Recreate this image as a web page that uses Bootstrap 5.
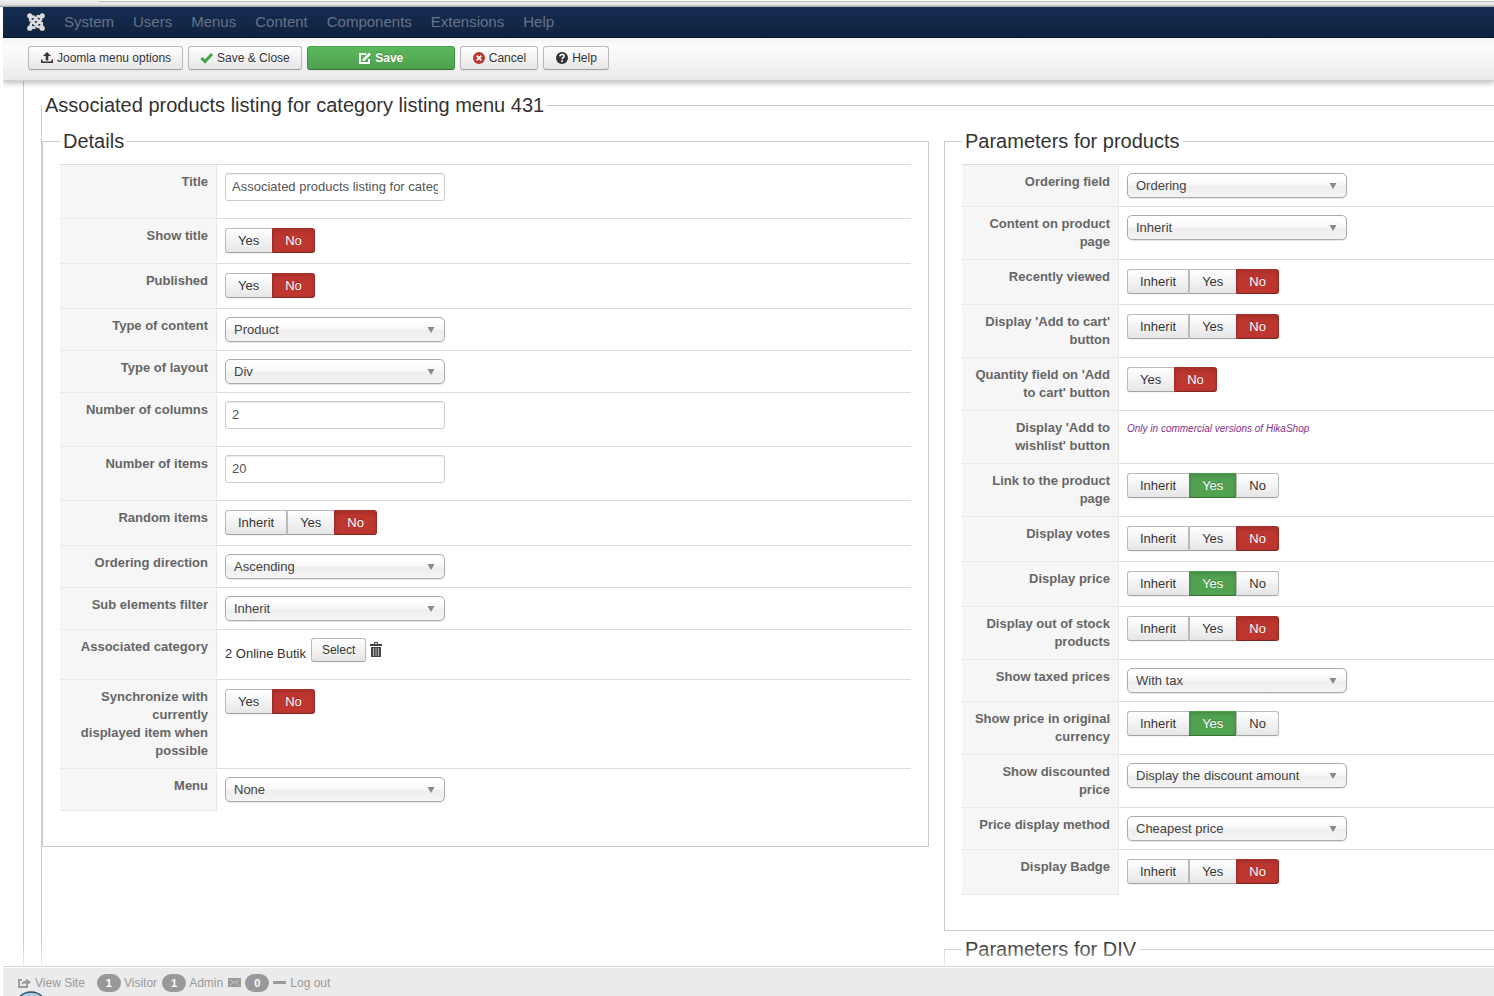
<!DOCTYPE html>
<html lang="en">
<head>
<meta charset="utf-8">
<meta name="viewport" content="width=device-width, initial-scale=1">
<title>Associated products listing - Administration</title>
<link href="https://cdn.jsdelivr.net/npm/bootstrap@5.3.0/dist/css/bootstrap.min.css" rel="stylesheet">
<style>
body{font-family:"Liberation Sans",Arial,sans-serif;font-size:13px;line-height:18px;color:#333;background:#fff}
.window-edge{height:7px;background:linear-gradient(#efefef,#e2e2e2 5px,#ababab 6px)}
.window-edge span{display:block;height:2px;margin-left:98px;background:#fff;border-bottom:1px solid #bdbdbd;border-radius:0 0 0 3px}
.app{margin-left:3px;min-height:0}
.topbar{height:31px;background:linear-gradient(#152d53,#10223e);border-bottom:1px solid #0b182c;padding:0 24px;gap:19px}
.topbar a{color:#66738a;font-size:15px;line-height:20px;text-decoration:none}
.topbar a:hover{color:#fff}
.toolbar{height:43px;background:linear-gradient(#f2f2f2,#fdfdfd 8px,#ebebeb);border-bottom:1px solid #d0d0d0;box-shadow:0 2px 6px rgba(0,0,0,.28);clip-path:inset(0 0 -12px 0);padding:8px 25px 0;gap:5px;z-index:2}
.btn{--bs-btn-font-size:13px;--bs-btn-line-height:18px;--bs-btn-border-radius:3px;--bs-btn-padding-y:2px;--bs-btn-padding-x:12px;color:#333;border:1px solid #bbb;border-bottom-color:#a2a2a2;background:linear-gradient(#fff,#e6e6e6);box-shadow:0 1px 2px rgba(0,0,0,.05);text-shadow:0 1px 1px rgba(255,255,255,.75)}
.toolbar .btn{--bs-btn-font-size:12px;--bs-btn-padding-x:11px;height:24px;gap:3px}
.toolbar .btn-save{width:148px;color:#fff;font-weight:bold;background:linear-gradient(#5cb85c,#4fa04f);border-color:#46a546 #419341 #387038;text-shadow:0 -1px 0 rgba(0,0,0,.25)}
.work{border-left:1px solid #ccc;margin-left:20px;padding:14px 0 0 17px;overflow:hidden;min-height:0}
fieldset{border:1px solid #ccc;min-width:0}
legend{float:none;width:auto;margin:0;padding:0 3px;font-size:20px;line-height:20px;color:#333}
.outer-set{border-width:1px 0 0 1px;min-height:100vh}
.outer-set>legend{margin-bottom:16px}
.panels{display:grid;grid-template-columns:minmax(0,887fr) minmax(0,550fr);column-gap:15px;align-items:start}
.panel-set{padding:13px 17px 17px}
.panel-right{padding-right:0;border-right:0}
.panel-set+.panel-set{margin-top:8px}
.admin-table{width:100%;table-layout:fixed;margin-bottom:18px;border-collapse:separate;border-spacing:0}
.admin-table th{width:157px;padding:8px;text-align:right;vertical-align:top;color:#666;background:#f6f6f6;border-right:1px solid #e9e9e9;border-top:1px solid #e9e9e9}
.admin-table td{padding:8px;vertical-align:top;border-top:1px solid #ddd}
.admin-table tr:first-child th{border-top-color:#ddd}
.admin-table tr:last-child th{border-bottom:1px solid #e9e9e9}
.admin-table tr:last-child td{padding-bottom:9px}
.admin-table .form-control{width:220px;height:28px;margin-bottom:9px;padding:3px 6px 5px;font-size:13px;line-height:18px;color:#555;border:1px solid #ccc;border-radius:3px;box-shadow:inset 0 1px 1px rgba(0,0,0,.075)}
.admin-table .form-select{width:220px;height:25px;padding:0 24px 0 8px;font-size:13px;line-height:22px;color:#444;border:1px solid #aaa;border-radius:5px;background:url("data:image/svg+xml,%3Csvg xmlns='http://www.w3.org/2000/svg' width='8' height='6'%3E%3Cpath d='M.5 0h7L4 6z' fill='%23888'/%3E%3C/svg%3E") no-repeat right 9px center,linear-gradient(#fff 20%,#f6f6f6 50%,#eee 52%,#f4f4f4);box-shadow:0 1px 1px rgba(0,0,0,.1)}
.choice{display:flex;width:max-content;margin:1px 0 2px}
.choice .btn{height:25px;padding-top:3px;border-radius:0}
.choice .btn:first-of-type{border-radius:3px 0 0 3px}
.choice .btn:last-of-type{border-radius:0 3px 3px 0}
.choice .btn:not(:last-of-type):has(+.btn-check:checked){border-right-width:0;padding-right:13px}
.btn-check:checked+.btn{color:#fff;text-shadow:0 -1px 0 rgba(0,0,0,.25);box-shadow:inset 0 2px 4px rgba(0,0,0,.15)}
.btn-check:checked+.btn.opt-yes{background:#51a351;border-color:#46a546 #419341 #387038}
.btn-check:checked+.btn.opt-no{background:#bd362f;border-color:#a93029 #a02a24 #802420}
.pick{height:33px;gap:4px}
.pick span{padding:7px 1px 0 0}
.pick .btn{--bs-btn-padding-x:10px;height:24px;font-size:12px}
.paid-only{font-size:10px;line-height:18px;font-style:italic;color:#85308c;text-decoration:none}
.statusbar{height:30px;background:#ebebeb;border-top:1px solid #d4d4d4;box-shadow:0 -5px 14px 6px rgba(255,255,255,.75),inset 0 1px 0 #fff;padding:2px 15px 0;font-size:12px;z-index:2;color:#999}
.statusbar a{color:#999;text-decoration:none}
.statusbar .badge{font-size:11px;line-height:14px;padding:2px 9px;margin-right:3px;border-radius:9px;background:#999;color:#fff}
.statusbar .count-name{margin-right:5px}
.orb{left:15px;bottom:0}
</style>
</head>
<body>
<div class="d-flex flex-column vh-100 overflow-hidden">
<div class="window-edge flex-shrink-0"><span></span></div>
<div class="app d-flex flex-column flex-grow-1">
<nav class="topbar d-flex align-items-center flex-shrink-0" aria-label="Main">
<a href="#" class="d-flex" aria-label="Home"><svg width="18" height="18" viewBox="0 0 18 18" fill="none" stroke="#dcdcdc" stroke-width="2.700"><path d="M3.300 8.500V6.200c0-2.600 3-3.200 4.700-1.500l5.500 5.500M9.500 3.400h2c2.800 0 3.400 3 1.700 4.600l-5.200 5M14.700 9v2.500c0 2.800-3.200 3.400-4.700 1.700L4.500 7.700M8.500 14.600h-2c-2.800 0-3.800-2.900-1.900-4.600l5.400-5.400"/><g fill="#dcdcdc" stroke="none"><circle cx="2.800" cy="2.800" r="2.600"/><circle cx="15.200" cy="2.800" r="2.600"/><circle cx="2.800" cy="15.200" r="2.600"/><circle cx="15.200" cy="15.200" r="2.600"/></g></svg></a>
<a href="#">System</a><a href="#">Users</a><a href="#">Menus</a><a href="#">Content</a><a href="#">Components</a><a href="#">Extensions</a><a href="#">Help</a>
</nav>
<div class="toolbar d-flex align-items-start flex-shrink-0 position-relative">
<button type="button" class="btn d-flex align-items-center"><svg width="14" height="12" viewBox="0 0 14 12" fill="#333"><path d="M7 0l4 4H8.300v4.500H5.700V4H3zM1 7.500h1.500v2h9v-2H13V11H1z"/></svg>Joomla menu options</button>
<button type="button" class="btn d-flex align-items-center"><svg width="14" height="12" viewBox="0 0 14 12" fill="none" stroke="#46a546" stroke-width="3"><path d="M1.500 6l3.500 3.500L12 2"/></svg>Save &amp; Close</button>
<button type="button" class="btn btn-save d-flex align-items-center justify-content-center"><svg width="14" height="13" viewBox="0 0 14 13" fill="none" stroke="#fff" stroke-width="2"><path d="M8 2H2v9h9V7"/><path d="M5 8.500L12 1.500" stroke-width="2.600"/></svg>Save</button>
<button type="button" class="btn d-flex align-items-center"><svg width="14" height="14" viewBox="0 0 14 14"><circle cx="7" cy="7" r="6" fill="#bd362f"/><path d="M4.700 4.700l4.600 4.600M9.300 4.700L4.700 9.300" stroke="#fff" stroke-width="1.800"/></svg>Cancel</button>
<button type="button" class="btn d-flex align-items-center"><svg width="14" height="14" viewBox="0 0 14 14"><circle cx="7" cy="7" r="6" fill="#333"/><path d="M4.900 5.400c.1-2.600 4.300-2.400 4.200-.1 0 1.400-2 1.300-2 2.900M7.100 9.200v1.700" fill="none" stroke="#fff" stroke-width="1.600"/></svg>Help</button>
</div>
<main class="work flex-grow-1">
<fieldset class="outer-set">
<legend>Associated products listing for category listing menu 431</legend>
<div class="panels">
<fieldset class="panel-set">
<legend>Details</legend>
<table class="admin-table" id="details"><tbody></tbody></table>
</fieldset>
<div>
<fieldset class="panel-set panel-right">
<legend>Parameters for products</legend>
<table class="admin-table" id="params"><tbody></tbody></table>
</fieldset>
<fieldset class="panel-set panel-right">
<legend>Parameters for DIV</legend>
</fieldset>
</div>
</div>
</fieldset>
</main>
<footer class="statusbar d-flex align-items-center flex-shrink-0 position-relative">
<svg class="orb position-absolute" width="26" height="5" viewBox="0 0 26 5" aria-hidden="true"><circle cx="13" cy="17" r="16" fill="#b3c9dc" stroke="#2c5479" stroke-width="1.500"/></svg>
<a href="#" class="d-flex align-items-center gap-1 me-2"><svg width="13" height="10" viewBox="0 0 13 10" fill="none" stroke="#999" stroke-width="1.800"><path d="M4 2H1v7h8V7"/><path d="M3.500 7C4 3.500 6 2.800 8 2.800V.5l5 3.700L8 7.700V5.500C6 5.500 4.500 5.800 3.500 7z" fill="#999" stroke="none"/></svg>View Site</a>
<span class="badge ms-1">1</span><span class="count-name">Visitor</span>
<span class="badge">1</span><span class="count-name">Admin</span>
<a href="#" class="d-flex me-1" aria-label="Messages"><svg width="13" height="9" viewBox="0 0 13 9"><path fill="#999" d="M0 0h13v9H0z"/><path d="M2 1.800l4.500 3 4.500-3M2 7.500l2.800-2.800M11 7.500L8.200 4.700" fill="none" stroke="#ccc"/></svg></a>
<span class="badge me-1">0</span>
<a href="#" class="d-flex align-items-center gap-1"><svg width="13" height="3" viewBox="0 0 13 3"><path fill="#999" d="M0 0h13v3H0z"/></svg>Log out</a>
</footer>
</div>
</div>
<script>
// Each row: [label, kind, value, options]
const details = [
  ['Title', 'text', 'Associated products listing for category listing menu 431'],
  ['Show title', 'radio', 'No', ['Yes', 'No']],
  ['Published', 'radio', 'No', ['Yes', 'No']],
  ['Type of content', 'select', 'Product'],
  ['Type of layout', 'select', 'Div'],
  ['Number of columns', 'text', '2'],
  ['Number of items', 'text', '20'],
  ['Random items', 'radio', 'No', ['Inherit', 'Yes', 'No']],
  ['Ordering direction', 'select', 'Ascending'],
  ['Sub elements filter', 'select', 'Inherit'],
  ['Associated category', 'pick', '2 Online Butik'],
  ['Synchronize with currently displayed&nbsp;item&nbsp;when possible', 'radio', 'No', ['Yes', 'No']],
  ['Menu', 'select', 'None']
];
const three = ['Inherit', 'Yes', 'No'];
const params = [
  ['Ordering field', 'select', 'Ordering'],
  ['Content on product page', 'select', 'Inherit'],
  ['Recently viewed', 'radio', 'No', three],
  ["Display 'Add to cart' button", 'radio', 'No', three],
  ["Quantity field on 'Add to cart' button", 'radio', 'No', ['Yes', 'No']],
  ["Display 'Add to wishlist' button", 'paid', 'Only in commercial versions of HikaShop'],
  ['Link to the product page', 'radio', 'Yes', three],
  ['Display votes', 'radio', 'No', three],
  ['Display price', 'radio', 'Yes', three],
  ['Display out of stock products', 'radio', 'No', three],
  ['Show taxed prices', 'select', 'With tax'],
  ['Show price in original currency', 'radio', 'Yes', three],
  ['Show discounted price', 'select', 'Display the discount amount'],
  ['Price display method', 'select', 'Cheapest price'],
  ['Display Badge', 'radio', 'No', three]
];
const trash = '<svg width="12" height="15" viewBox="0 0 12 15"><path fill="#444" d="M4 0h4v2h4v2H0V2h4zM1 5h10v10H1z"/><path d="M5 1.500h2" stroke="#fff"/><path d="M3.500 6v8M6 6v8M8.500 6v8" stroke="#bbb"/></svg>';
function control(kind, value, options, id) {
  if (kind === 'text') return `<input type="text" class="form-control" id="${id}" value="${value}">`;
  if (kind === 'select') return `<select class="form-select" id="${id}"><option>${value}</option></select>`;
  if (kind === 'radio') return `<div class="choice" role="group" aria-labelledby="${id}-label">` + options.map(o =>
    `<input type="radio" class="btn-check" name="${id}" id="${id}-${o}"${o === value ? ' checked' : ''}><label class="btn opt-${o.toLowerCase()}" for="${id}-${o}">${o}</label>`).join('') + '</div>';
  if (kind === 'pick') return `<div class="pick d-flex align-items-start"><span>${value}</span><button type="button" class="btn">Select</button><a href="#" class="d-flex pt-1" aria-label="Delete">${trash}</a></div>`;
  return `<a href="#" class="paid-only">${value}</a>`;
}
function fill(tableId, rows) {
  document.querySelector(`#${tableId} tbody`).innerHTML = rows.map(([label, kind, value, options], i) => {
    const id = `${tableId}-${i}`;
    const text = kind === 'text' || kind === 'select' ? `<label for="${id}">${label}</label>` : `<span id="${id}-label">${label}</span>`;
    return `<tr><th scope="row">${text}</th><td>${control(kind, value, options, id)}</td></tr>`;
  }).join('');
}
fill('details', details);
fill('params', params);
</script>
<script src="https://cdn.jsdelivr.net/npm/bootstrap@5.3.0/dist/js/bootstrap.bundle.min.js"></script>
</body>
</html>
